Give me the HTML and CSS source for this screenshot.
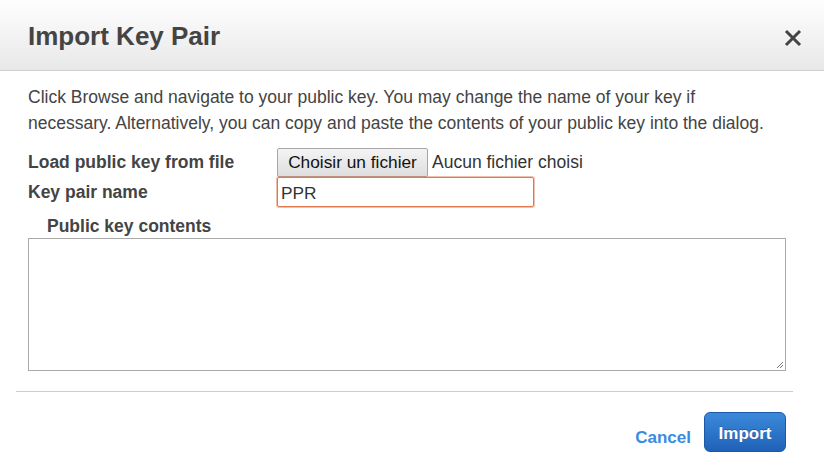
FILE: index.html
```html
<!DOCTYPE html>
<html>
<head>
<meta charset="utf-8">
<link rel="stylesheet" href="styles.css">
</head>
<body>
<div class="dialog">
  <div class="header">
    <h1 class="title">Import Key Pair</h1>
    <svg class="close" width="18" height="18" viewBox="0 0 18 18"><path d="M2 2L16 16M16 2L2 16" stroke="#444" stroke-width="3" stroke-linecap="butt"/></svg>
  </div>
  <div class="body">
    <p class="intro">Click Browse and navigate to your public key. You may change the name of your key if necessary. Alternatively, you can copy and paste the contents of your public key into the dialog.</p>
    <div class="form">
      <div class="label">Load public key from file</div>
      <div class="filefield"><span class="filebtn">Choisir un fichier</span><span class="filename">Aucun fichier choisi</span></div>
      <div class="label">Key pair name</div>
      <div class="namefield"><div class="nameinput">PPR</div></div>
    </div>
    <div class="sublabel">Public key contents</div>
    <div class="textarea"><svg class="grip" width="9" height="9" viewBox="0 0 9 9"><path d="M8 2L2 8M8 5L5 8" stroke="#777" stroke-width="1"/></svg></div>
  </div>
  <div class="divider"></div>
  <div class="footer">
    <a class="cancel">Cancel</a>
    <span class="import">Import</span>
  </div>
</div>
</body>
</html>
```
FILE: styles.css
```css
html, body { margin: 0; padding: 0; background: #fff; }
body { font-family: "Liberation Sans", Arial, sans-serif; color: #444; }
.dialog { width: 824px; height: 473px; background: #fff; }
.header {
  height: 70px;
  border-bottom: 1px solid #cfcfcf;
  background: linear-gradient(#fefefe, #e8e8e8);
  display: flex;
  align-items: center;
  justify-content: space-between;
  padding: 0 22px 0 28px;
}
.title { margin: 0; font-size: 26px; font-weight: bold; color: #444; position: relative; top: 1px; }
.close { display: block; margin-top: 6px; }
.body { padding: 0 38px 0 28px; }
.intro { margin: 13px 0 0; width: 748px; font-size: 17.5px; line-height: 26px; color: #444; }
.form {
  margin-top: 12px;
  display: grid;
  grid-template-columns: 249px 1fr;
  grid-template-rows: 29px 30px;
  align-items: center;
}
.label { font-size: 17.5px; font-weight: bold; color: #444; }
.filefield { display: flex; align-items: center; height: 29px; }
.filebtn {
  box-sizing: border-box;
  height: 29px;
  width: 151px;
  display: flex;
  align-items: center;
  justify-content: center;
  font-size: 17.3px;
  color: #111;
  background: linear-gradient(#f4f4f4, #dedede);
  border: 1px solid #a6a6a6;
  border-radius: 2px;
}
.filename { font-size: 17.5px; color: #333; margin-left: 4px; }
.namefield { height: 30px; display: flex; }
.nameinput {
  box-sizing: border-box;
  width: 257px;
  height: 30px;
  border: 1px solid #e2764c;
  box-shadow: 0 0 0 1px rgba(226, 118, 76, 0.45);
  border-radius: 2px;
  font-size: 17.3px;
  color: #333;
  padding: 2px 3px 0;
  display: flex;
  align-items: center;
}
.sublabel { font-size: 17.5px; font-weight: bold; color: #444; margin: 10px 0 0 19px; line-height: 18px; }
.textarea {
  margin-top: 3px;
  box-sizing: border-box;
  height: 133px;
  border: 1px solid #a9a9a9;
  position: relative;
}
.grip { position: absolute; right: 1px; bottom: 1px; }
.divider { margin: 20px 31px 0 16px; height: 1px; background: #cbcbcb; }
.footer {
  display: flex;
  justify-content: flex-end;
  align-items: center;
  padding: 20px 38px 0 0;
  gap: 13px;
}
.cancel { font-size: 17px; font-weight: bold; color: #3b8be0; margin-top: 11px; }
.import {
  box-sizing: border-box;
  width: 82px;
  height: 40px;
  display: flex;
  align-items: center;
  justify-content: center;
  padding-top: 3px;
  font-size: 17px;
  font-weight: bold;
  color: #fff;
  background: linear-gradient(#3c89da, #1f62b8);
  border: 1px solid #1b58a6;
  border-radius: 6px;
  text-shadow: 0 -1px 0 rgba(0,0,0,0.25);
}
```
